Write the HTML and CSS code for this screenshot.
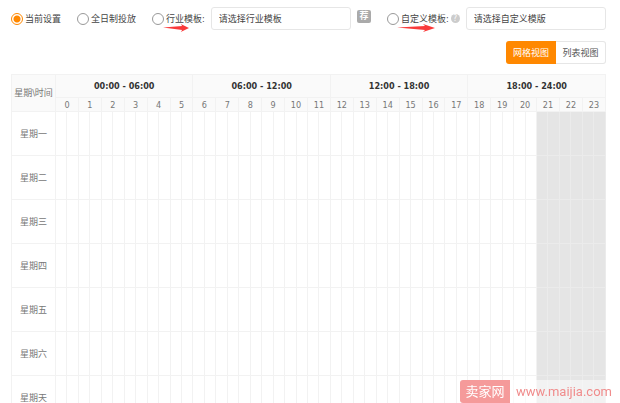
FILE: index.html
```html
<!DOCTYPE html>
<html lang="zh-CN">
<head>
    <meta charset="UTF-8">
    <meta name="viewport" content="width=device-width, initial-scale=1.0">
    <title>投放时间设置</title>
    <link rel="stylesheet" href="styles.css">
</head>
<body>
    <div class="container">
        <form class="options">
            <label class="option"><input type="radio" name="mode" checked>当前设置</label>
            <label class="option"><input type="radio" name="mode">全日制投放</label>
            <div class="group">
                <label class="option marked"><input type="radio" name="mode">行业模板:
                    <svg class="arrow" viewBox="0 0 38 8" preserveAspectRatio="none" aria-hidden="true"><path d="M0 3.6 L28 2 L26 0 L38 4 L26 8 L28 6 Z"/></svg>
                </label>
                <select class="template" aria-label="行业模板">
                    <option>请选择行业模板</option>
                </select>
                <span class="badge">荐</span>
            </div>
            <div class="group custom">
                <label class="option marked"><input type="radio" name="mode">自定义模板:
                    <svg class="arrow arrow-long" viewBox="0 0 38 8" preserveAspectRatio="none" aria-hidden="true"><path d="M0 3.6 L28 2 L26 0 L38 4 L26 8 L28 6 Z"/></svg>
                </label>
                <span class="help">?</span>
                <select class="template" aria-label="自定义模板">
                    <option>请选择自定义模版</option>
                </select>
            </div>
        </form>

        <div class="views">
            <button type="button" class="view active">网格视图</button>
            <button type="button" class="view">列表视图</button>
        </div>

        <table class="schedule">
            <colgroup>
                <col class="day-col">
                <col span="48">
            </colgroup>
            <thead>
                <tr class="periods">
                    <th class="corner" rowspan="2">星期\时间</th>
                    <th colspan="12">00:00 - 06:00</th>
                    <th colspan="12">06:00 - 12:00</th>
                    <th colspan="12">12:00 - 18:00</th>
                    <th colspan="12">18:00 - 24:00</th>
                </tr>
                <tr class="hours" id="hours"></tr>
            </thead>
            <tbody id="days"></tbody>
        </table>
    </div>

    <div class="watermark">
        <span class="mark-name">卖家网</span>
        <span class="mark-url">www.maijia.com</span>
    </div>
    <script src="script.js"></script>
</body>
</html>
```
FILE: styles.css
```css
* {
    box-sizing: border-box;
}
body {
    margin: 0;
    overflow: hidden;
    background: #fff;
    color: #444;
    font-family: "DejaVu Sans Condensed", "Noto Sans CJK SC", sans-serif;
    font-size: 9px;
    line-height: 12px;
}
.container {
    padding: 7px 14px 0 11px;
}
.options {
    display: flex;
    align-items: center;
    gap: 16px;
    height: 23px;
}
.group {
    display: flex;
    flex: 1;
    align-items: center;
    gap: 6px;
}
.custom {
    gap: 2px;
}
.custom .template {
    margin-left: 4px;
}
.option {
    display: flex;
    align-items: center;
    gap: 2px;
    white-space: nowrap;
}
.marked {
    position: relative;
}
.option input {
    appearance: none;
    width: 12px;
    height: 12px;
    margin: 0;
    border: 1px solid #999;
    border-radius: 50%;
    background: #fff;
}
.option input:checked {
    border-color: #ff8800;
    background: radial-gradient(circle, #ff8800 3px, #fff 4px);
}
.arrow {
    position: absolute;
    top: 11px;
    left: 11px;
    width: 26px;
    height: 8px;
    fill: #f93a3a;
}
.arrow-long {
    left: 10px;
    width: 38px;
}
.template {
    appearance: none;
    flex: 1;
    min-width: 0;
    height: 23px;
    padding: 0 7px;
    border: 1px solid #e6e6e6;
    border-radius: 3px;
    background: #fff;
    color: #444;
    font: inherit;
}
.badge {
    width: 14px;
    height: 13px;
    margin-top: -5px;
    border-radius: 2px;
    background: #aaa;
    color: #fff;
    font-weight: bold;
    text-align: center;
}
.help {
    width: 9px;
    height: 9px;
    border-radius: 50%;
    background: #ccc;
    color: #fff;
    font-size: 8px;
    line-height: 9px;
    text-align: center;
}
.views {
    display: flex;
    justify-content: flex-end;
    margin: 11px 0 10px;
}
.view {
    width: 50px;
    height: 23px;
    padding: 0;
    border: 1px solid #e6e6e6;
    border-left: 0;
    border-radius: 0 3px 3px 0;
    background: #fff;
    color: #555;
    font: inherit;
}
.view.active {
    border: 0;
    border-radius: 3px 0 0 3px;
    background: #ff8800;
    color: #fff;
}
.schedule {
    width: 100%;
    table-layout: fixed;
    border-collapse: collapse;
    color: #777;
}
.day-col {
    width: 44px;
}
.schedule th,
.schedule td {
    padding: 0;
    border: 1px solid #f2f2f2;
    font-weight: normal;
    text-align: center;
    white-space: nowrap;
}
.schedule thead th {
    background: #fafafa;
}
.periods {
    height: 23px;
}
.periods th:not(.corner) {
    color: #333;
    font-weight: bold;
}
.hours {
    height: 14px;
}
.schedule tbody tr {
    height: 44px;
}
.schedule td.off {
    border-color: #ebebeb;
    background: #e5e5e5;
}
.watermark {
    position: fixed;
    right: 0;
    bottom: 0;
    display: flex;
    width: 160px;
    height: 23px;
    line-height: 23px;
}
.mark-name {
    width: 50px;
    border-radius: 3px 0 0 3px;
    background: #f59a9a;
    color: #fff;
    font-size: 13px;
    text-align: center;
}
.mark-url {
    flex: 1;
    padding-left: 6px;
    background: rgba(255, 255, 255, 0.5);
    color: #f08c8c;
    font-family: Roboto, sans-serif;
    font-size: 13px;
}
```
FILE: script.js
```js
const days = ["一", "二", "三", "四", "五", "六", "天"];
const hours = document.getElementById("hours");
const body = document.getElementById("days");

for (let h = 0; h < 24; h++) {
    const th = document.createElement("th");
    th.colSpan = 2;
    th.textContent = h;
    hours.appendChild(th);
}

// two half-hour cells per hour, nothing runs after 21:00
days.forEach(day => {
    const row = body.insertRow();
    const th = document.createElement("th");
    th.textContent = "星期" + day;
    row.appendChild(th);
    for (let i = 0; i < 48; i++) {
        const cell = row.insertCell();
        if (i >= 42) {
            cell.className = "off";
        }
    }
});
```
